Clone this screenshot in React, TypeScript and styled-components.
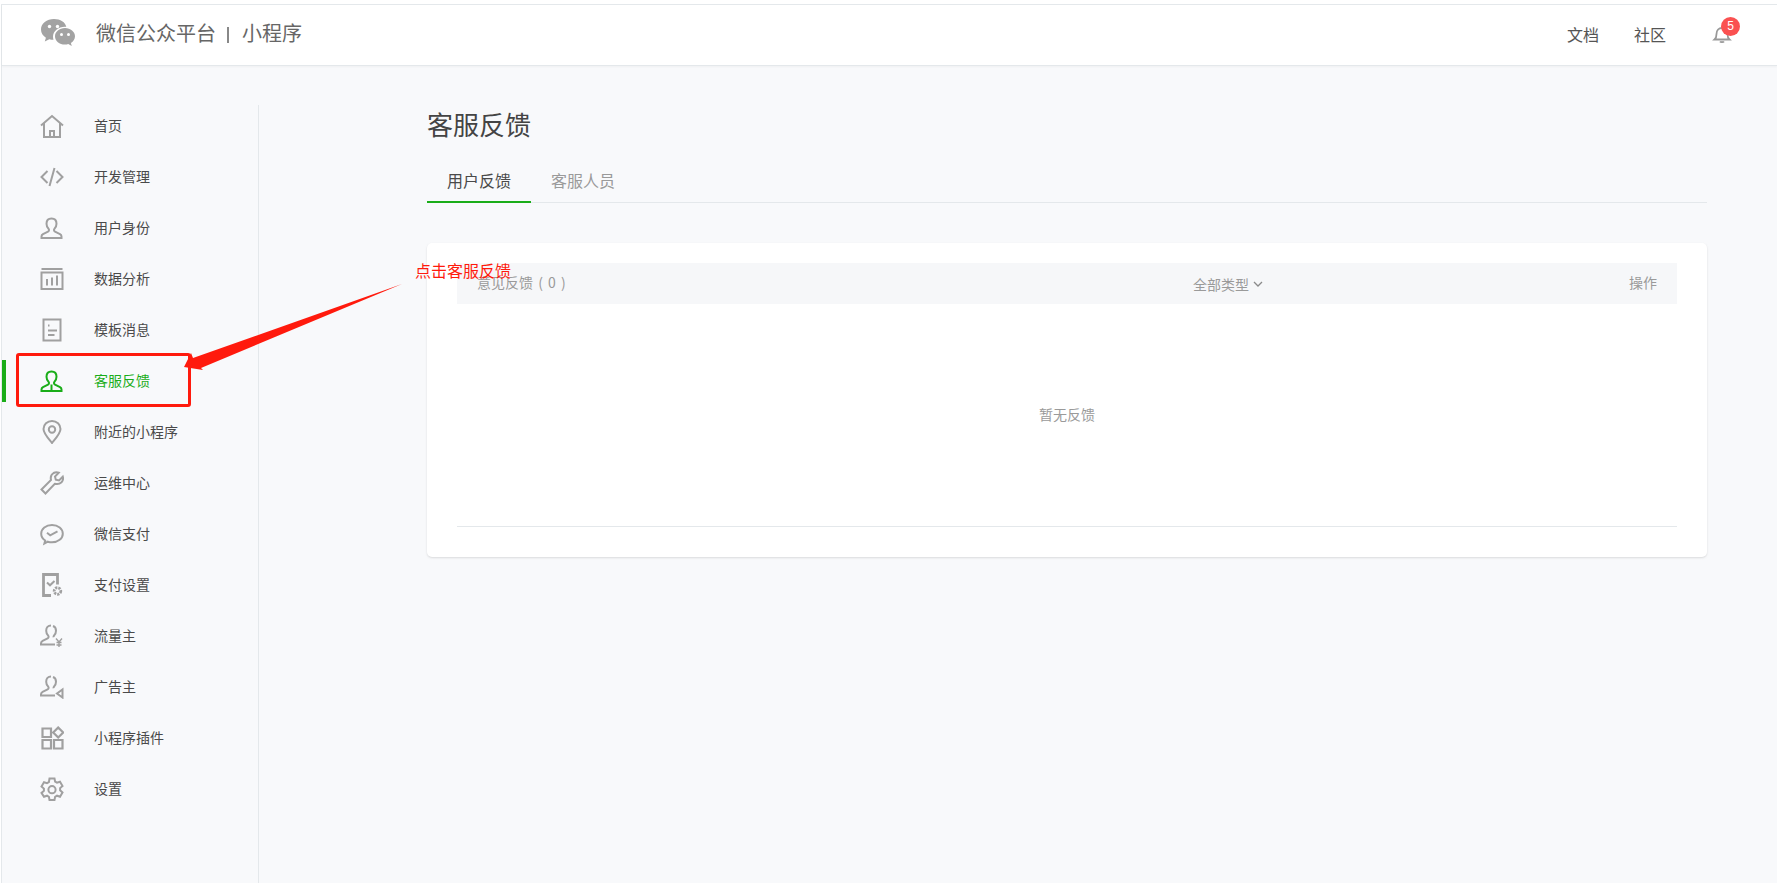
import React from "react"
import styled, { createGlobalStyle } from "styled-components"

const GlobalStyle = createGlobalStyle`
  html, body {
    margin: 0;
    padding: 0;
    height: 100%;
    background: #fff;
  }
  body {
    font-family: "Noto Sans CJK SC", "Liberation Sans", sans-serif;
    color: #4a4a4a;
    overflow: hidden;
  }
  * { box-sizing: border-box; }
`

const Page = styled.div`
  position: relative;
  height: 883px;
  padding-top: 4px;
  padding-left: 1px;
  overflow: hidden;
`

const Frame = styled.div`
  height: 100%;
  display: flex;
  flex-direction: column;
  border-top: 1px solid #e4e8eb;
  border-left: 1px solid #e4e8eb;
  background: #f8f9fb;
`

/* ---------- top bar ---------- */
const Header = styled.header`
  height: 61px;
  flex: none;
  display: flex;
  align-items: center;
  justify-content: space-between;
  padding: 0 45px 0 39px;
  background: #fff;
  border-bottom: 1px solid #e4e8eb;
  box-shadow: 0 1px 2px rgba(0, 0, 0, 0.04);
`

const Brand = styled.div`
  display: flex;
  align-items: center;
  gap: 21px;
  margin-top: -5px;
`

const BrandName = styled.span`
  font-size: 20px;
  line-height: 28px;
  color: #666;
`

const BrandSep = styled.span`
  display: inline-block;
  width: 2px;
  height: 16px;
  margin: 0 13px 0 11px;
  background: #888;
  vertical-align: -2px;
`

const TopLinks = styled.nav`
  display: flex;
  align-items: center;
  margin-top: -2px;
`

const TopLink = styled.a`
  font-size: 16px;
  line-height: 24px;
  color: #555;
  margin-right: 35px;
`

const BellWrap = styled.div`
  position: relative;
  width: 20px;
  height: 20px;
  margin-left: 11px;
  color: #999;
`

const Badge = styled.span`
  position: absolute;
  top: -7px;
  left: 9px;
  width: 19px;
  height: 19px;
  border-radius: 50%;
  background: #fa5151;
  color: #fff;
  font-family: "Liberation Sans", sans-serif;
  font-size: 12px;
  line-height: 19px;
  text-align: center;
`

/* ---------- body ---------- */
const Body = styled.div`
  flex: 1;
  display: flex;
  min-height: 0;
`

const Sidebar = styled.aside`
  width: 257px;
  flex: none;
  margin-top: 39px;
  border-right: 1px solid #e4e8eb;
  display: flex;
  flex-direction: column;
  gap: 9px;
`

const NavItem = styled.a<{ $active?: boolean }>`
  height: 42px;
  display: flex;
  align-items: center;
  gap: 30px;
  padding-left: 34px;
  font-size: 14px;
  color: ${(p) => (p.$active ? "#1aad19" : "#4a4a4a")};
  border-left: 4px solid ${(p) => (p.$active ? "#1aad19" : "transparent")};
`

const NavLabel = styled.span`
  margin-top: -2px;
`

const Icon = styled.svg<{ $active?: boolean }>`
  width: 24px;
  height: 24px;
  flex: none;
  fill: none;
  stroke: ${(p) => (p.$active ? "#1aad19" : "#a0a0a0")};
  stroke-width: 2;
`

const Main = styled.main`
  flex: 1;
  padding: 40px 70px 0 168px;
`

const Title = styled.h2`
  margin: 0;
  font-size: 26px;
  font-weight: 400;
  line-height: 36px;
  color: #444;
`

const Tabs = styled.div`
  display: flex;
  margin-top: 21px;
  border-bottom: 1px solid #e4e8eb;
`

const Tab = styled.a<{ $active?: boolean }>`
  height: 40px;
  margin-bottom: -1px;
  padding: 0 20px;
  font-size: 16px;
  line-height: 34px;
  color: ${(p) => (p.$active ? "#4a4a4a" : "#9a9a9a")};
  border-bottom: 2px solid ${(p) => (p.$active ? "#1aad19" : "transparent")};
`

const Card = styled.section`
  margin-top: 40px;
  height: 314px;
  padding: 20px 30px 30px;
  background: #fff;
  border-radius: 5px;
  box-shadow: 0 1px 2px rgba(150, 150, 150, 0.3);
  display: flex;
  flex-direction: column;
`

const TableHead = styled.div`
  height: 41px;
  flex: none;
  display: grid;
  grid-template-columns: 1fr 190px 274px;
  align-items: center;
  padding: 0 20px;
  background: #f6f7f9;
  font-size: 14px;
  color: #9a9a9a;
`

const FeedbackCell = styled.div`
  word-spacing: 2px;
  margin-top: -4px;
`

const TypeCell = styled.div`
  display: flex;
  align-items: center;
  gap: 4px;
  margin-top: 1px;
`

const ActionCell = styled.div`
  text-align: right;
  margin-top: -4px;
`

const Empty = styled.div`
  flex: 1;
  display: flex;
  align-items: center;
  justify-content: center;
  padding-bottom: 3px;
  border-bottom: 1px solid #e4e8eb;
  font-size: 14px;
  color: #9a9a9a;
`

/* ---------- red annotation drawn over the page ---------- */
const MarkBox = styled.div`
  position: absolute;
  left: 16px;
  top: 353px;
  width: 175px;
  height: 54px;
  border: 3px solid #ff1a0d;
  border-radius: 3px;
`

const MarkArrow = styled.svg`
  position: absolute;
  left: 0;
  top: 0;
  width: 420px;
  height: 400px;
  fill: #ff1a0d;
`

const MarkText = styled.span`
  position: absolute;
  left: 415px;
  top: 258px;
  font-size: 16px;
  line-height: 24px;
  color: #ff1a0d;
`

const I = ({ active, children }: { active?: boolean; children: React.ReactNode }) => (
  <Icon $active={active} viewBox="0 0 24 24">{children}</Icon>
)

const thinUser =
  "M11 1.500c-3 0-4.800 2.300-4.800 5.200 0 2.100.9 4 2.100 5.100.6.9.3 2-.7 2.500l-5 2.600c-.9.5-1.600 1.300-1.600 2.300v1.300h14"

const HomeIcon = () => (
  <I><path d="M1 11.500 12 2l11 9.500M4 9.500V23h16V9.500M10 23v-6h4v6" /></I>
)
const CodeIcon = () => (
  <I><path d="M7.500 6 1.500 12l6 6M16.500 6l6 6-6 6M14.500 3 9.500 21" /></I>
)
const UserIcon = ({ active }: { active?: boolean }) => (
  <I active={active}>
    <path d="M11.500 2.500c-3.200 0-5 2.300-5 5.300 0 2.200.9 4.100 2.200 5.300.6.900.3 2.100-.7 2.600l-5 2.500c-.9.500-1.500 1.300-1.500 2.300v1.400h20v-1.400c0-1-.6-1.800-1.500-2.300l-5-2.500c-1-.5-1.300-1.700-.7-2.600 1.300-1.200 2.200-3.100 2.200-5.300 0-3-1.800-5.300-5-5.300z" />
    {active && <path d="M11.500 15.500v6.500" strokeWidth="2" />}
  </I>
)
const ChartIcon = () => (
  <I><path d="M1.500 2h21M1.500 5.500h21V22h-21zM7 12v6.500M12 10.500v8M17 8.500v10" /></I>
)
const DocIcon = () => (
  <I>
    <path d="M3.500 1.500h17v21h-17z" />
    <path d="M8 7.500h1.500M8 12.500h9M8 17h6.500" />
  </I>
)
const PinIcon = () => (
  <I>
    <path d="M12 23c-1-1.700-8.500-9-8.500-14C3.500 4.500 7.300 1 12 1s8.500 3.500 8.500 8c0 5-7.500 12.300-8.500 14z" />
    <circle cx="12" cy="9.500" r="3.200" />
  </I>
)
const WrenchIcon = () => (
  <I>
    <path d="M1.500 18.500 11 9c-.7-3 .2-5.500 2.600-7 1.700-.9 3.700-.9 5.200-.3L15 5.500l.8 3.200 3.200.8 3.800-3.800c.6 2 .2 4-1.300 5.600-1.800 1.800-4 2.200-6.700 1.500L5.500 22.500z" />
  </I>
)
const PayIcon = () => (
  <I>
    <path d="M12 3C5.900 3 1.200 6.800 1.200 11.700c0 2.800 1.500 5.200 4 6.800l-.8 3.100 3.400-1.900c1.300.4 2.700.6 4.200.6 6.100 0 10.800-3.800 10.800-8.600S18.100 3 12 3z" />
    <path d="m7 10.800 3.200 2.500 7.300-4" />
  </I>
)
const PaySetIcon = () => (
  <I>
    <path d="M17.500 11.500V1.500H3.500v21H11" strokeWidth="2.800" />
    <path d="m7 9.500 3 2.800 4.500-4.300" />
    <circle cx="17.500" cy="18" r="3.300" strokeWidth="2.800" strokeDasharray="2.200 1" />
  </I>
)
const AdvHostIcon = () => (
  <I>
    <path d={thinUser} />
    <path d="M13 2c2 .7 3 2.500 3 4.700 0 2.100-.9 4-2.100 5.100-.3.500-.4 1-.3 1.500" />
    <path d="m16 14.500 3 3.500 3-3.500M19 18v5M16.500 18.500h5M16.500 21h5" strokeWidth="1.400" />
  </I>
)
const AdvIcon = () => (
  <I>
    <path d={thinUser} />
    <path d="M13 2c2 .7 3 2.500 3 4.700 0 2.100-.9 4-2.100 5.100-.3.500-.4 1-.3 1.500" />
    <path d="M22.500 14.500v8l-5.500-4z" />
  </I>
)
const PluginIcon = () => (
  <I>
    <path d="M2.500 2.500h8.500v8.500H2.500zM2.500 14h8.500v8.500H2.500zM14 14h8.500v8.500H14zM18.200 1.500l5 5-5 5-5-5z" strokeWidth="2.200" />
  </I>
)
const GearIcon = () => (
  <I>
    <path d="M9.500 1.500h5l.6 3.100 1.900 1.100 3-1 2.500 4.300-2.400 2.100v2.200l2.400 2.100-2.500 4.300-3-1-1.900 1.100-.6 3.100h-5l-.6-3.100-1.900-1.100-3 1L1.500 15.900l2.400-2.100v-2.200L1.500 9.500 4 5.200l3 1 1.900-1.100z" />
    <circle cx="12" cy="12.700" r="3.600" />
  </I>
)

const BellIcon = () => (
  <svg viewBox="0 0 20 20" width="20" height="20" fill="none" stroke="currentColor" strokeWidth="1.800">
    <path d="M2.500 15.500c1.500-1.300 2-3 2-5.500 0-3.500 2.300-6 5.500-6s5.500 2.500 5.500 6c0 2.500.5 4.200 2 5.500z" />
    <path d="M8 17.500c.5.700 3.500.7 4 0" />
  </svg>
)

const LogoMark = () => (
  <svg viewBox="0 0 34 28" width="34" height="28" aria-hidden="true">
    <path
      fill="#a3a3a3"
      d="M13 0C5.800 0 0 4.600 0 10.500c0 3.400 1.900 6.300 4.900 8.200L3.800 22.500l4.500-2.300c1.300.4 2.800.6 4.200.6-.3-1-.5-2-.5-3 0-5.600 5.300-10 11.900-10 .5 0 .9 0 1.400.1C24.500 3.200 19.300 0 13 0z"
    />
    <path
      fill="#a3a3a3"
      d="M24 9c-5.600 0-10 3.700-10 8.300s4.400 8.300 10 8.300c1.100 0 2.200-.1 3.200-.5l3.600 2-.9-3.100c2.500-1.500 4.100-3.900 4.100-6.700C34 12.700 29.500 9 24 9z"
    />
    <circle cx="8.500" cy="7.500" r="1.700" fill="#fff" />
    <circle cx="16.500" cy="7.500" r="1.700" fill="#fff" />
    <circle cx="20.500" cy="15.500" r="1.500" fill="#fff" />
    <circle cx="27.500" cy="15.500" r="1.500" fill="#fff" />
  </svg>
)

const navItems: { label: string; icon: (p: { active?: boolean }) => React.ReactElement; active?: boolean }[] = [
  { label: "首页", icon: HomeIcon },
  { label: "开发管理", icon: CodeIcon },
  { label: "用户身份", icon: UserIcon },
  { label: "数据分析", icon: ChartIcon },
  { label: "模板消息", icon: DocIcon },
  { label: "客服反馈", icon: UserIcon, active: true },
  { label: "附近的小程序", icon: PinIcon },
  { label: "运维中心", icon: WrenchIcon },
  { label: "微信支付", icon: PayIcon },
  { label: "支付设置", icon: PaySetIcon },
  { label: "流量主", icon: AdvHostIcon },
  { label: "广告主", icon: AdvIcon },
  { label: "小程序插件", icon: PluginIcon },
  { label: "设置", icon: GearIcon },
]

const App = () => {
  return (
    <Page>
      <GlobalStyle />
      <Frame>
        <Header>
          <Brand>
            <LogoMark />
            <BrandName>
              微信公众平台<BrandSep />小程序
            </BrandName>
          </Brand>
          <TopLinks>
            <TopLink>文档</TopLink>
            <TopLink>社区</TopLink>
            <BellWrap>
              <BellIcon />
              <Badge>5</Badge>
            </BellWrap>
          </TopLinks>
        </Header>
        <Body>
          <Sidebar>
            {navItems.map((item) => (
              <NavItem key={item.label} $active={item.active}>
                <item.icon active={item.active} />
                <NavLabel>{item.label}</NavLabel>
              </NavItem>
            ))}
          </Sidebar>
          <Main>
            <Title>客服反馈</Title>
            <Tabs>
              <Tab $active>用户反馈</Tab>
              <Tab>客服人员</Tab>
            </Tabs>
            <Card>
              <TableHead>
                <FeedbackCell>意见反馈 ( 0 )</FeedbackCell>
                <TypeCell>
                  全部类型
                  <svg viewBox="0 0 10 6" width="10" height="6" fill="none" stroke="#8a8a8a" strokeWidth="1.300">
                    <path d="m1 1 4 4 4-4" />
                  </svg>
                </TypeCell>
                <ActionCell>操作</ActionCell>
              </TableHead>
              <Empty>暂无反馈</Empty>
            </Card>
          </Main>
        </Body>
      </Frame>
      <MarkArrow viewBox="0 0 420 400">
        <polygon points="184,367 191,353 193,358 402,284 201,368 203,370" />
      </MarkArrow>
      <MarkBox />
      <MarkText>点击客服反馈</MarkText>
    </Page>
  )
}

export default App
